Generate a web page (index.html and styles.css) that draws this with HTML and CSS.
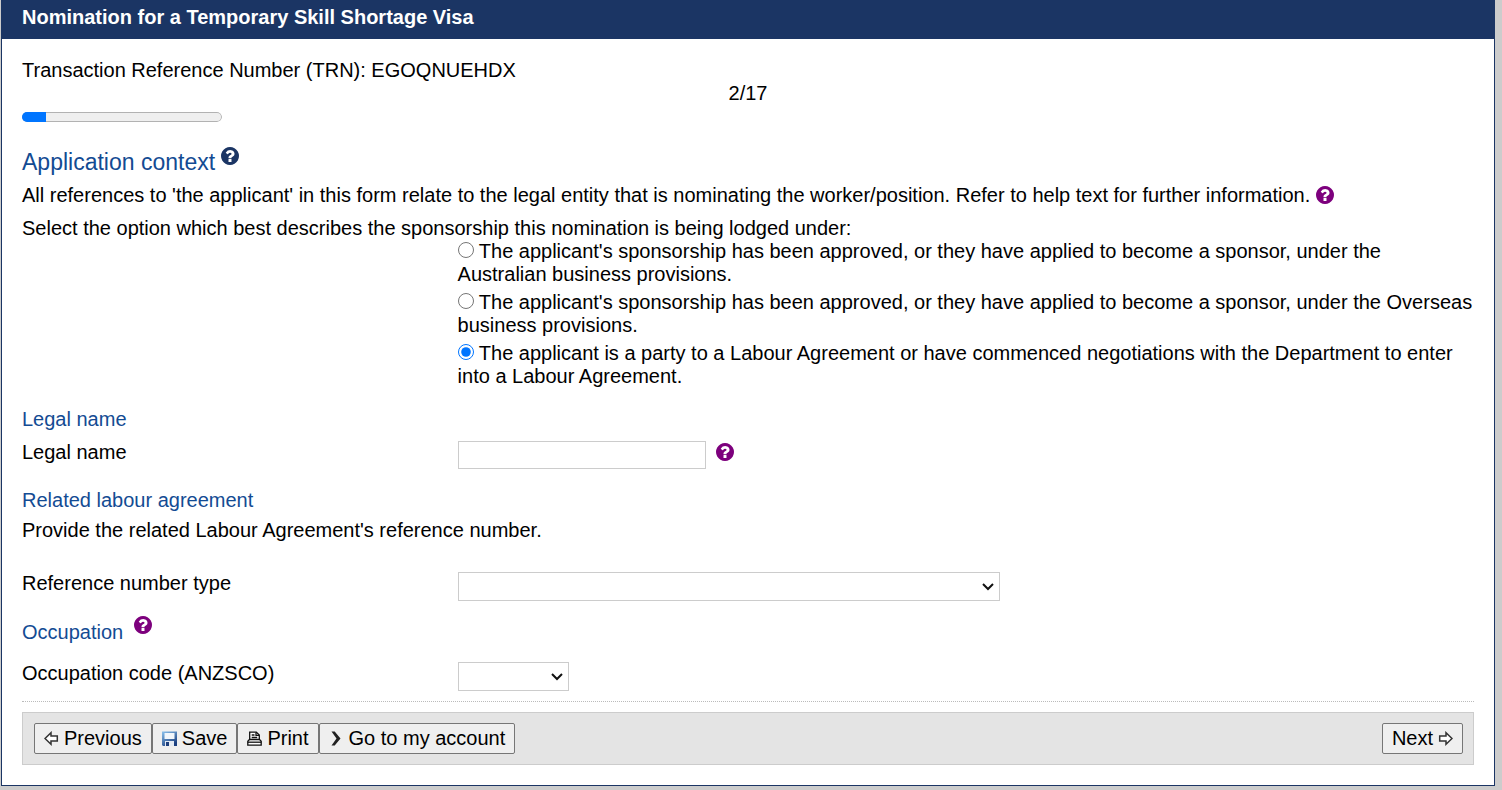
FILE: index.html
```
<!DOCTYPE html>
<html lang="en">
<head>
    <meta charset="utf-8">
    <meta name="viewport" content="width=device-width, initial-scale=1.0">
    <title>Nomination for a Temporary Skill Shortage Visa</title>
    <link rel="stylesheet" href="styles.css">
</head>
<body>
<!-- shared icon -->
<svg class="sprite" width="0" height="0" aria-hidden="true">
    <symbol id="help" viewBox="0 128 1536 1536">
        <path fill="currentColor" d="M896 1376v-192q0-14-9-23t-23-9h-192q-14 0-23 9t-9 23v192q0 14 9 23t23 9h192q14 0 23-9t9-23zM1152 704q0-88-55.500-163t-138.500-116-170-41q-243 0-371 213-15 24 8 42l132 100q7 6 19 6 16 0 25-12 53-68 86-92 34-24 86-24 48 0 85.500 26t37.500 59q0 38-20 61t-68 45q-63 28-115.500 86.500t-52.500 125.500v36q0 14 9 23t23 9h192q14 0 23-9t9-23q0-19 21.500-49.500t54.500-49.500q32-18 49-28.500t46-35 44.500-48 28-60.500 12.500-81zM1536 896q0 209-103 385.500t-279.500 279.500-385.500 103-385.500-103-279.500-279.500-103-385.500 103-385.500 279.500-279.500 385.500-103 385.500 103 279.500 279.500 103 385.500z"/>
    </symbol>
</svg>
<form class="panel">
    <header class="panel-head">
        <h1>Nomination for a Temporary Skill Shortage Visa</h1>
    </header>
    <main class="panel-body">
        <p>Transaction Reference Number (TRN): EGOQNUEHDX</p>
        <p class="step">2/17</p>
        <progress class="progress" value="2" max="17" aria-label="Progress"></progress>

        <h2>Application context <button type="button" class="help help-raised" aria-label="Help"><svg><use href="#help"/></svg></button></h2>
        <p class="intro">All references to 'the applicant' in this form relate to the legal entity that is nominating the worker/position. Refer to help text for further information. <button type="button" class="help" aria-label="Help"><svg><use href="#help"/></svg></button></p>

        <fieldset class="options">
            <legend>Select the option which best describes the sponsorship this nomination is being lodged under:</legend>
            <div class="option-list">
                <label><input type="radio" name="sponsorship" value="business"> The applicant's sponsorship has been approved, or they have applied to become a sponsor, under the Australian business provisions.</label>
                <label><input type="radio" name="sponsorship" value="overseas"> The applicant's sponsorship has been approved, or they have applied to become a sponsor, under the Overseas business provisions.</label>
                <label><input type="radio" name="sponsorship" value="labour" checked> The applicant is a party to a Labour Agreement or have commenced negotiations with the Department to enter into a Labour Agreement.</label>
            </div>
        </fieldset>

        <h3>Legal name</h3>
        <div class="row">
            <label for="legalName">Legal name</label>
            <div class="field">
                <input type="text" id="legalName" class="text">
                <button type="button" class="help" aria-label="Help"><svg><use href="#help"/></svg></button>
            </div>
        </div>

        <h3>Related labour agreement</h3>
        <p class="hint">Provide the related Labour Agreement's reference number.</p>
        <div class="row">
            <label for="refType">Reference number type</label>
            <div class="field">
                <select id="refType" class="wide"><option></option></select>
            </div>
        </div>

        <h3>Occupation <button type="button" class="help help-raised" aria-label="Help"><svg><use href="#help"/></svg></button></h3>
        <div class="row row-last">
            <label for="anzsco">Occupation code (ANZSCO)</label>
            <div class="field">
                <select id="anzsco" class="narrow"><option></option></select>
            </div>
        </div>

        <footer class="toolbar">
            <button type="button">
                <svg width="15" height="16" viewBox="0 0 15 16"><path d="M1 7.500l6-5.800V5h6.300v5H7v3.300z" fill="#fff" stroke="#333" stroke-width="1.500"/></svg>
                Previous
            </button>
            <button type="button">
                <svg width="15" height="16" viewBox="0 0 15 16">
                    <defs>
                        <linearGradient id="disk" x1="0" y1="0" x2="0.6" y2="1">
                            <stop offset="0" stop-color="#8cc3ee"/>
                            <stop offset="1" stop-color="#1b3f80"/>
                        </linearGradient>
                    </defs>
                    <path d="M0 .5h15V15H1l-1-1z" fill="url(#disk)"/>
                    <path d="M2.500 2h10v6h-10z" fill="#f1f6fb"/>
                    <path d="M3 10h9v5H3z" fill="#e3eaf3"/>
                    <path d="M4 11h3v4H4z" fill="#1f3f7c"/>
                </svg>
                Save
            </button>
            <button type="button">
                <svg width="15" height="16" viewBox="0 0 15 16" fill="#fff" stroke="#111" stroke-width="1.300">
                    <path d="M2.700 8.500V1.200h6.600l3 2.800v4.500"/>
                    <path d="M9 1.500v2.800h3M4.700 4h2.800M4.700 6.500h5.500" fill="none"/>
                    <path d="M.8 14.200v-4l1.700-1.700h10l1.700 1.700v4z"/>
                    <path d="M.8 11.200h13.400" fill="none"/>
                </svg>
                Print
            </button>
            <button type="button">
                <svg width="15" height="16" viewBox="0 0 15 16"><path d="M2.500.5h3.200l5.800 7-5.800 7H2.500l5-7z" fill="#222"/></svg>
                Go to my account
            </button>
            <button type="submit" class="next">
                Next
                <svg width="15" height="16" viewBox="0 0 15 16"><path d="M14 7.500L8 1.700V5H1.700v5H8v3.300z" fill="#fff" stroke="#333" stroke-width="1.500"/></svg>
            </button>
        </footer>
    </main>
</form>
</body>
</html>
```

FILE: styles.css
```
@charset "utf-8";
body,h1,h2,h3,p,fieldset,legend{padding:0; margin:0; border:0;}
*{box-sizing:border-box;}
body{
    background-color:#ccc;
    color:#000;
    font:20px/23px Arial, "Liberation Sans", sans-serif;
}
button,input,select{font:inherit; color:inherit; margin:0;}
.sprite{position:absolute;}

/*panel*/
.panel{
    margin:0 7px 4px 1px;
    border:1px solid #1b3564;
    border-top:0;
    background-color:#fff;
}
.panel-head{
    padding:6px 20px 10px;
    background-color:#1b3564;
    color:#fff;
}
.panel-head h1{font-size:20px; font-weight:bold;}
.panel-body{padding:20px;}
.step{text-align:center;}
.progress{
    -webkit-appearance:none;
    appearance:none;
    display:block;
    width:200px;
    height:10px;
    margin-top:7px;
    border:0;
    border-radius:5px;
    overflow:hidden;
}
.progress::-webkit-progress-bar{
    border-radius:5px;
    background-color:#efefef;
    box-shadow:inset 0 0 0 1px #b2b2b2;
}
.progress::-webkit-progress-value{background-color:#0075ff;}

/*headings*/
h2,h3{
    color:#134b93;
    font-weight:normal;
}
h2{
    margin:26px 0 8px;
    font-size:23px;
    line-height:28px;
}
h3{
    margin:20px 0 7px;
    font-size:20px;
    line-height:23px;
}

/*help icon*/
.help{
    width:18px;
    height:18px;
    padding:0;
    border:0;
    background:none;
    color:#7d007d;
    vertical-align:-2px;
    cursor:pointer;
}
.help svg{
    display:block;
    width:18px;
    height:18px;
}
.help-raised{
    margin:-8px 0 0 5px;
    vertical-align:5px;
}
h2 .help{
    margin-left:0;
    color:#1b3564;
}

/*options*/
.intro{margin-bottom:10px;}
.option-list{padding-left:30%;}
.option-list label{display:block;}
.option-list label+label{margin-top:5px;}
.option-list input{
    width:16px;
    height:16px;
}

/*form rows*/
.row{
    display:flex;
    margin-top:10px;
}
.row>label{width:30%;}
.field{
    flex:1;
    display:flex;
    gap:10px;
}
.field .help{margin-top:2px;}
.text,
select{
    border:1px solid #ccc;
    border-radius:0;
    background-color:#fff;
}
.text{
    width:248px;
    height:28px;
}
select{
    -webkit-appearance:none;
    appearance:none;
    height:29px;
    background:#fff url("data:image/svg+xml,%3Csvg xmlns='http://www.w3.org/2000/svg' width='12' height='8'%3E%3Cpath d='M1 1l5 5 5-5' fill='none' stroke='%23111' stroke-width='2'/%3E%3C/svg%3E") no-repeat right 5px center;
}
.wide{width:542px;}
.narrow{width:111px;}
.hint{margin-bottom:30px;}
.row-last{
    margin-top:18px;
    padding-bottom:10px;
    border-bottom:1px dotted #bbb;
}

/*toolbar*/
.toolbar{
    display:flex;
    margin-top:10px;
    padding:10px 10px 10px 11px;
    border:1px solid #ccc;
    background-color:#e4e4e4;
}
.toolbar button{
    display:flex;
    align-items:center;
    gap:5px;
    height:31px;
    padding:0 9px;
    border:1px solid #767676;
    border-radius:2px;
    background-color:#efefef;
}
.toolbar .next{margin-left:auto;}
```
